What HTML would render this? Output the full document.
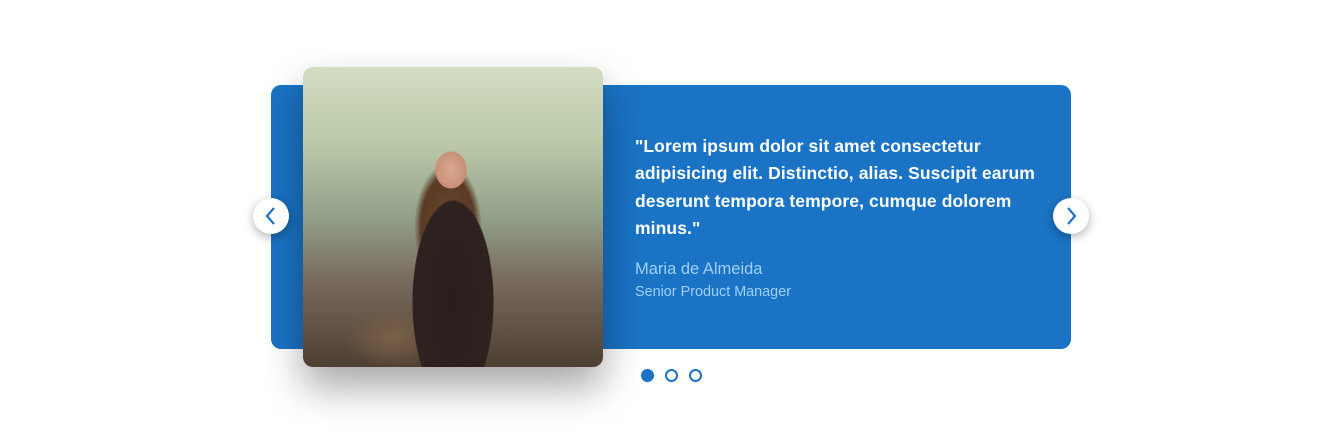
<!DOCTYPE html>
<html><head><meta charset="utf-8"><style>
html,body{margin:0;padding:0;background:#fff;width:1342px;height:439px;overflow:hidden;font-family:"Liberation Sans",sans-serif}
.card{position:absolute;left:271px;top:85px;width:800px;height:264px;background:#1a73c4;border-radius:10px}
.photo{position:absolute;left:303px;top:67px;width:300px;height:300px;border-radius:10px;overflow:hidden;
box-shadow:0 20px 40px rgba(0,0,0,.35);
background:
radial-gradient(ellipse 22px 26px at 148px 103px,#d9a890 0,#c99078 70%,transparent 72%),
radial-gradient(ellipse 50px 125px at 150px 235px,#2a1d1c 0,#2e2220 80%,transparent 82%),
radial-gradient(ellipse 45px 85px at 145px 160px,#6e4a30 0,#5a3a26 60%,transparent 75%),
radial-gradient(ellipse 60px 40px at 90px 270px,#7a6046 0,transparent 80%),
linear-gradient(180deg,#d3dcc2 0%,#bcc9a9 25%,#93a08a 50%,#76685a 72%,#4e3f33 100%)}
.q{position:absolute;left:635px;top:133px;width:420px;color:#fff;font-size:17.5px;font-weight:600;line-height:27.3px;letter-spacing:.1px}
.n{position:absolute;left:635px;top:260px;color:#9fd0ff;font-size:16.5px}
.t{position:absolute;left:635px;top:284px;color:#9fd0ff;font-size:14.4px}
.arr{position:absolute;top:198px;width:36px;height:36px;border-radius:50%;background:#fff;box-shadow:0 3px 10px rgba(0,0,0,.3)}
.arr svg{position:absolute;left:10px;top:9px}
.dot{position:absolute;top:369px;width:9px;height:9px;border:2px solid #1a73c4;border-radius:50%}
</style></head><body>
<div class="card"></div>
<div class="photo"></div>
<div class="q">"Lorem ipsum dolor sit amet consectetur adipisicing elit. Distinctio, alias. Suscipit earum deserunt tempora tempore, cumque dolorem minus."</div>
<div class="n">Maria de Almeida</div>
<div class="t">Senior Product Manager</div>
<div class="arr" style="left:253px"><svg width="16" height="18" viewBox="0 0 16 18"><path d="M11 1 L4 9 L11 17" fill="none" stroke="#1a73c4" stroke-width="2.2"/></svg></div>
<div class="arr" style="left:1053px"><svg width="16" height="18" viewBox="0 0 16 18"><path d="M5 1 L12 9 L5 17" fill="none" stroke="#1a73c4" stroke-width="2.2"/></svg></div>
<div class="dot" style="left:641px;background:#1a73c4"></div>
<div class="dot" style="left:665px"></div>
<div class="dot" style="left:689px"></div>
</body></html>
